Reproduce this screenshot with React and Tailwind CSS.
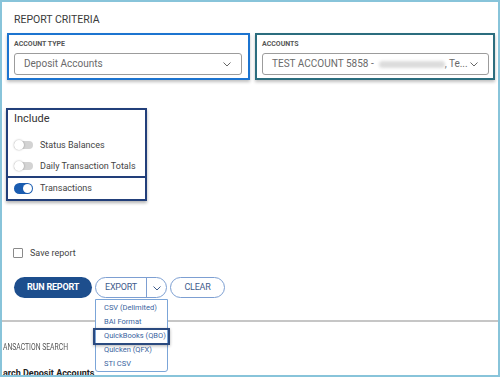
function Chevron({ className = '', color = '#666' }) {
  return (
    <svg className={className} width="8" height="5" viewBox="0 0 8 5" fill="none">
      <polyline points="0.5,0.5 4,4 7.5,0.5" stroke={color} strokeWidth="1" />
    </svg>
  );
}

function Toggle({ on }) {
  return on ? (
    <span className="relative inline-flex h-[11px] w-[19px] shrink-0 items-center rounded-full bg-[#1a5cb0]">
      <span className="absolute right-[1px] h-[9px] w-[9px] rounded-full bg-white" />
    </span>
  ) : (
    <span className="relative inline-flex h-[8px] w-[19px] shrink-0 items-center rounded-full bg-[#d3d3d3]">
      <span className="absolute left-0 h-[10px] w-[10px] rounded-full bg-white shadow-[0_0_2px_rgba(0,0,0,0.35)]" />
    </span>
  );
}

function ToggleRow({ on, label, className = '' }) {
  return (
    <div className={`flex h-[14px] items-center gap-[7px] ${className}`}>
      <Toggle on={on} />
      <span className="text-[9px] leading-[14px] text-[#444]">{label}</span>
    </div>
  );
}

function SelectField({ label, width, children }) {
  return (
    <div className="pl-[5px] pt-[5px]">
      <div className="text-[7px] font-bold leading-[9px] text-[#555]">{label}</div>
      <div
        className="mt-[4px] flex h-[22px] items-center justify-between rounded-[3px] border border-[#9c9c9c] pl-[9px] pr-[10px]"
        style={{ width }}
      >
        <div className="flex items-center text-[10px] leading-[12px] text-[#6a6a6a] whitespace-nowrap">{children}</div>
        <Chevron />
      </div>
    </div>
  );
}

const exportFormats = ['CSV (Delimited)', 'BAI Format', 'QuickBooks (QBO)', 'Quicken (QFX)', 'STI CSV'];

export default function App() {
  return (
    <div className="relative h-[377px] w-[500px] overflow-hidden border-2 border-[#88c4da] bg-white font-['Roboto',sans-serif]">
      <div className="ml-[12px] mt-[11px] text-[10.5px] leading-[14px] text-[#3a3a3a]">REPORT CRITERIA</div>

      <div className="ml-[5px] mt-[6px] flex gap-[5px]">
        <div className="h-[47px] w-[243px] border-2 border-[#1c74d0] shadow-[0_2px_3px_rgba(0,0,0,0.25)]">
          <SelectField label="ACCOUNT TYPE" width={228}>
            Deposit Accounts
          </SelectField>
        </div>
        <div className="h-[47px] w-[240px] border-2 border-[#2b6d7e] shadow-[0_2px_3px_rgba(0,0,0,0.25)]">
          <SelectField label="ACCOUNTS" width={227}>
            <span>TEST ACCOUNT 5858 -</span>
            <span className="ml-[5px] inline-block h-[7px] w-[66px] rounded-full bg-[#dcdcdc] blur-[1.5px]" />
            <span>, Te...</span>
          </SelectField>
        </div>
      </div>

      <div className="ml-[4px] mt-[28px] w-[141px] shadow-[0_2px_3px_rgba(0,0,0,0.3)]">
        <div className="h-[70px] border-2 border-[#223f7a] pl-[6px] pt-[2px]">
          <div className="text-[11px] leading-[14px] text-[#333]">Include</div>
          <ToggleRow label="Status Balances" className="mt-[12px]" />
          <ToggleRow label="Daily Transaction Totals" className="mt-[7px]" />
        </div>
        <div className="h-[23px] border-2 border-t-0 border-[#223f7a] pl-[6px] pt-[3px]">
          <ToggleRow on label="Transactions" />
        </div>
      </div>

      <div className="ml-[11px] mt-[47px] flex h-[10px] items-center gap-[7px]">
        <span className="h-[10px] w-[10px] rounded-[1px] border border-[#8a8a8a]" />
        <span className="text-[9px] leading-[10px] text-[#444]">Save report</span>
      </div>

      <div className="ml-[12px] mt-[19px] flex h-[21px] gap-[3px]">
        <button className="h-[21px] w-[78px] rounded-full bg-[#1d4e8d] text-[9px] font-bold leading-[21px] tracking-[-0.2px] text-white">
          RUN REPORT
        </button>
        <div className="relative">
          <div className="flex h-[21px] w-[72px] rounded-full border border-[#7d9fd2]">
            <span className="flex w-[51px] items-center justify-center border-r border-[#7d9fd2] text-[9px] tracking-[-0.2px] text-[#3f5c8c]">
              EXPORT
            </span>
            <span className="flex flex-1 items-center justify-center pt-[2px]">
              <Chevron color="#3f5c8c" />
            </span>
          </div>
          <div className="absolute left-0 top-[22px] z-10 h-[73px] w-[73px] rounded-b-[3px] border border-[#7ba5d8] bg-white pl-[8px] pt-px">
            {exportFormats.map((item) => (
              <div key={item} className="h-[14px] text-[7.5px] leading-[14px] text-[#3a64a0] whitespace-nowrap">
                {item}
              </div>
            ))}
            <div className="absolute left-[-3px] top-[28px] h-[17px] w-[77px] border-2 border-[#2b4a7f] shadow-[0_1px_3px_rgba(0,0,0,0.3)]" />
          </div>
        </div>
        <button className="h-[21px] w-[55px] rounded-full border border-[#7d9fd2] text-[9px] leading-[19px] tracking-[-0.2px] text-[#3f5c8c]">
          CLEAR
        </button>
      </div>

      <div className="mt-[22px] h-[2px] bg-[#c6c6c6]" />

      <div className="ml-px mt-[20px] text-[8.5px] leading-[10px] text-[#555]">
        <span className="inline-block origin-left scale-x-[0.8] whitespace-nowrap">ANSACTION SEARCH</span>
      </div>
      <div className="ml-px mt-[16px] text-[9px] font-bold leading-[10px] text-[#222]">arch Deposit Accounts</div>
    </div>
  );
}
